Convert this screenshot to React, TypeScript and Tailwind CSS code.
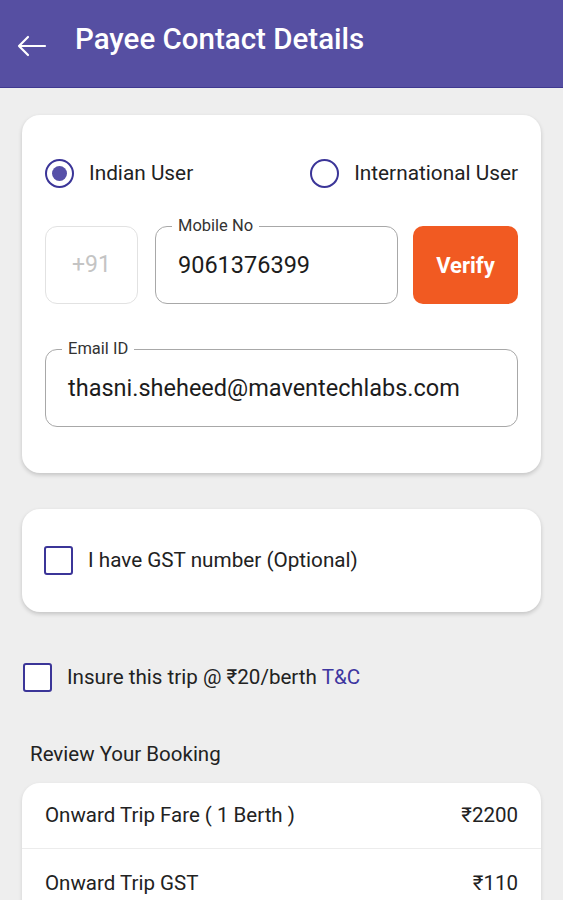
const font = { fontFamily: "Roboto, 'Noto Sans', sans-serif" };

function Radio({ checked, label }: { checked?: boolean; label: string }) {
  return (
    <div className="flex items-center gap-[15px]">
      <span className="flex h-[29px] w-[29px] items-center justify-center rounded-full border-2 border-[#3b3598]">
        {checked ? <span className="h-[15px] w-[15px] rounded-full bg-[#5650a8]" /> : null}
      </span>
      <span className="text-[20.8px] text-[#222]">{label}</span>
    </div>
  );
}

function Outlined({ label, value, className }: { label: string; value: string; className?: string }) {
  return (
    <div className={`relative flex items-center rounded-[12px] border border-[#a8a8a8] ${className ?? ""}`}>
      <span className="absolute -top-[12px] left-[16px] bg-white px-[6px] text-[16.5px] leading-[22px] text-[#333]">{label}</span>
      <span className="pl-[22px] text-[23.5px] text-[#1c1c1c]">{value}</span>
    </div>
  );
}

function Checkbox() {
  return <span className="block h-[29px] w-[29px] shrink-0 rounded-[3px] border-2 border-[#3b3598] bg-white" />;
}

export default function App() {
  return (
    <div className="min-h-[900px] w-[563px] overflow-hidden bg-[#eeeeee]" style={font}>
      <header className="flex h-[88px] items-center border-b border-[#3f3990] bg-[#564fa2] pb-[9px] pl-[17px]">
        <svg width="30" height="22" viewBox="0 0 30 22" fill="none" stroke="white" strokeWidth="2.2" strokeLinecap="round" strokeLinejoin="round" className="mt-[14px]">
          <path d="M2 11h26M11 2 2 11l9 9" />
        </svg>
        <h1 className="ml-[28px] text-[29.5px] font-medium text-white">Payee Contact Details</h1>
      </header>

      <div className="mx-[22px] mt-[27px] rounded-[18px] bg-white px-[23px] pb-[46px] pt-[43px] shadow-[0_2px_4px_rgba(0,0,0,0.18)]">
        <div className="flex items-center justify-between">
          <Radio checked label="Indian User" />
          <Radio label="International User" />
        </div>
        <div className="mt-[37px] flex h-[78px]">
          <div className="flex w-[93px] items-center justify-center rounded-[12px] border border-[#e2e2e2] text-[23px] text-[#c4c4c4]">+91</div>
          <Outlined label="Mobile No" value="9061376399" className="ml-[17px] w-[243px]" />
          <button className="ml-[15px] flex-1 rounded-[10px] bg-[#f15a22] text-[22px] font-bold text-white">Verify</button>
        </div>
        <Outlined label="Email ID" value="thasni.sheheed@maventechlabs.com" className="mt-[45px] h-[78px]" />
      </div>

      <div className="mx-[22px] mt-[36px] flex h-[103px] items-center gap-[15px] rounded-[18px] bg-white pl-[22px] shadow-[0_2px_4px_rgba(0,0,0,0.18)]">
        <Checkbox />
        <span className="text-[20.7px] text-[#222]">I have GST number (Optional)</span>
      </div>

      <div className="mt-[50px] flex items-center gap-[15px] pl-[23px]">
        <Checkbox />
        <span className="text-[20.6px] text-[#222]">
          Insure this trip @ ₹20/berth <span className="text-[#3d36a0]">T&amp;C</span>
        </span>
      </div>

      <h2 className="mt-[46px] pl-[30px] text-[20.5px] text-[#222]">Review Your Booking</h2>

      <div className="mx-[22px] mt-[13px] rounded-[18px] bg-white shadow-[0_2px_4px_rgba(0,0,0,0.12)]">
        <div className="flex h-[66px] items-center justify-between border-b border-[#ececec] px-[23px] text-[20.5px] text-[#222]">
          <span>Onward Trip Fare ( 1 Berth )</span>
          <span>₹2200</span>
        </div>
        <div className="flex h-[70px] items-center justify-between px-[23px] text-[20.5px] text-[#222]">
          <span>Onward Trip GST</span>
          <span>₹110</span>
        </div>
      </div>
    </div>
  );
}
